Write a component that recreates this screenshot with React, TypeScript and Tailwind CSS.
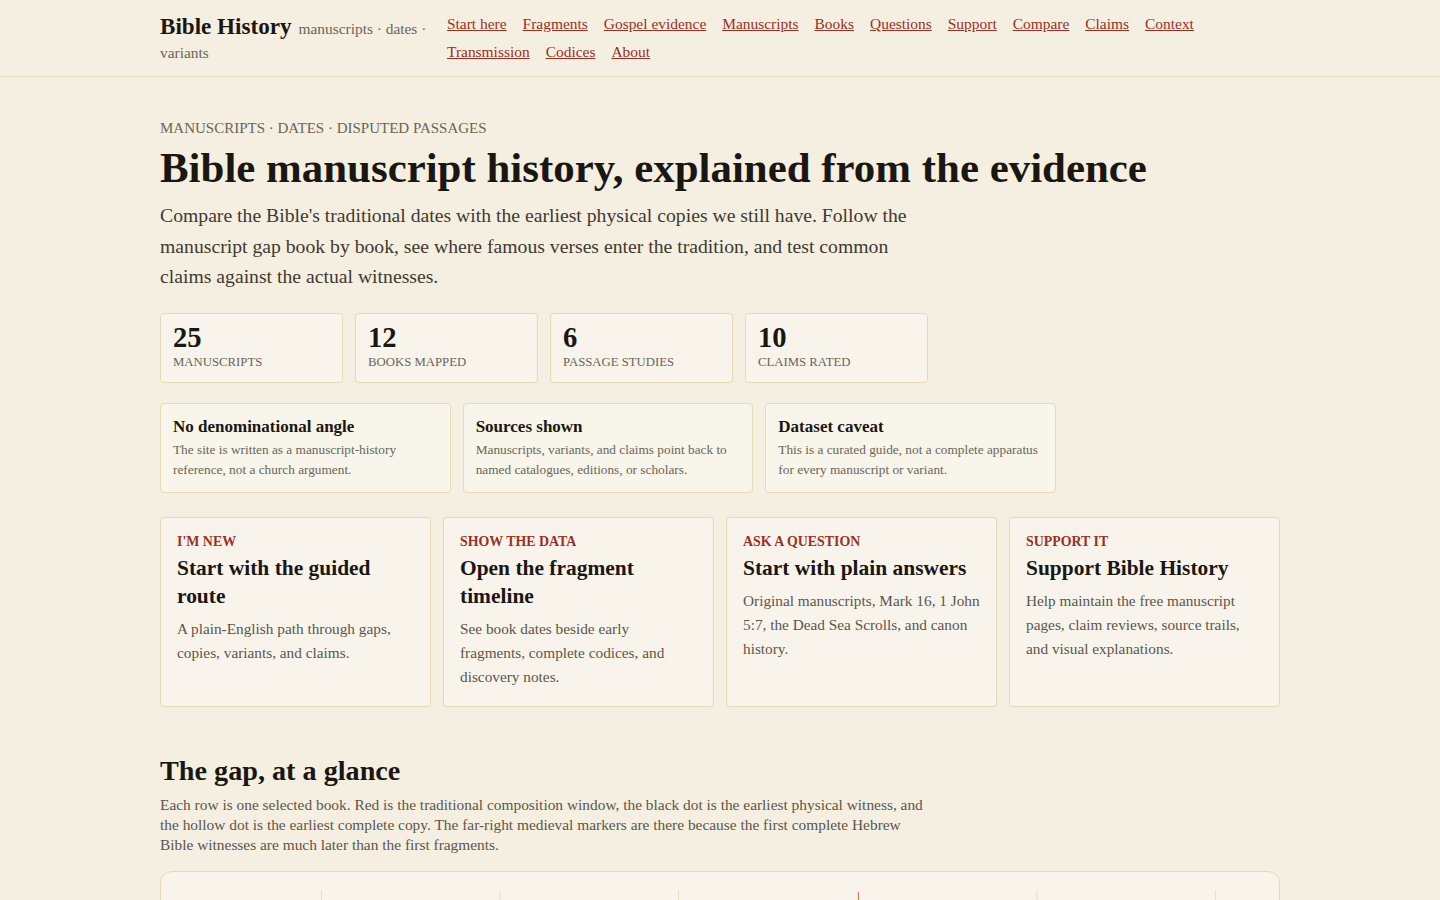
import React from 'react';

const navLinks = ['Start here', 'Fragments', 'Gospel evidence', 'Manuscripts', 'Books', 'Questions', 'Support', 'Compare', 'Claims', 'Context', 'Transmission', 'Codices', 'About'];

const stats = [
  { value: '25', label: 'Manuscripts' },
  { value: '12', label: 'Books mapped' },
  { value: '6', label: 'Passage studies' },
  { value: '10', label: 'Claims rated' },
];

const trust = [
  { title: 'No denominational angle', body: 'The site is written as a manuscript-history reference, not a church argument.' },
  { title: 'Sources shown', body: 'Manuscripts, variants, and claims point back to named catalogues, editions, or scholars.' },
  { title: 'Dataset caveat', body: 'This is a curated guide, not a complete apparatus for every manuscript or variant.' },
];

const routes = [
  { kicker: "I'm new", title: 'Start with the guided route', body: 'A plain-English path through gaps, copies, variants, and claims.' },
  { kicker: 'Show the data', title: 'Open the fragment timeline', body: 'See book dates beside early fragments, complete codices, and discovery notes.' },
  { kicker: 'Ask a question', title: 'Start with plain answers', body: 'Original manuscripts, Mark 16, 1 John 5:7, the Dead Sea Scrolls, and canon history.' },
  { kicker: 'Support it', title: 'Support Bible History', body: 'Help maintain the free manuscript pages, claim reviews, source trails, and visual explanations.' },
];

const ticks = [160.5, 339, 517.5, 697, 876, 1054.5];

export default function App() {
  return (
    <div className="h-screen overflow-hidden bg-[#f4efe0] text-[#1a1712] font-['Liberation_Serif',serif]">
      <header className="border-b border-[#e6d9b8]">
        <div className="max-w-[1120px] mx-auto py-[10px] flex items-start gap-[20px]">
          <div className="w-[267px] shrink-0 leading-[24px] pt-[4px]">
            <span className="text-[23.1px] leading-[24px] font-bold mr-[7px]">Bible History</span>
            <span className="text-[15.4px] leading-[24px] text-[#6b6558]">manuscripts · dates · variants</span>
          </div>
          <nav className="flex flex-wrap gap-x-4">
            {navLinks.map(link => (
              <a key={link} href="#" className="text-[15.45px] leading-[28px] text-[#9a3024] underline">{link}</a>
            ))}
          </nav>
        </div>
      </header>

      <main className="max-w-[1120px] mx-auto pt-[40px]">
        <div className="text-[15px] leading-[22px] uppercase text-[#6b6558]">Manuscripts · Dates · Disputed passages</div>
        <h1 className="mt-[5px] text-[42.9px] leading-[48px] font-bold">Bible manuscript history, explained from the evidence</h1>
        <p className="mt-[8px] max-w-[760px] text-[19.7px] leading-[30.6px] text-[#3f3a30]">
          Compare the Bible's traditional dates with the earliest physical copies we still have. Follow the manuscript gap book by book, see where famous verses enter the tradition, and test common claims against the actual witnesses.
        </p>

        <div className="mt-[21px] flex gap-3">
          {stats.map(stat => (
            <div key={stat.label} className="w-[183px] h-[70px] px-3 pt-[9px] bg-[#f8f4ec] border border-[#e6d9b8] rounded">
              <div className="text-[28.6px] leading-[30px] font-bold">{stat.value}</div>
              <div className="text-[12.75px] leading-[18px] uppercase text-[#6b6558]">{stat.label}</div>
            </div>
          ))}
        </div>

        <div className="mt-[20px] w-[896px] grid grid-cols-3 gap-3">
          {trust.map(item => (
            <div key={item.title} className="h-[90px] px-3 pt-[12px] bg-[#f8f5ea] border border-[#e6d9b8] rounded">
              <div className="text-[17px] leading-[22px] font-bold">{item.title}</div>
              <p className="mt-[2px] text-[13.3px] leading-[20px] text-[#6b6558]">{item.body}</p>
            </div>
          ))}
        </div>

        <div className="mt-[24px] grid grid-cols-4 gap-3">
          {routes.map(route => (
            <div key={route.title} className="h-[190px] px-4 pt-[15px] bg-[#f8f4ec] border border-[#e6d9b8] rounded">
              <div className="text-[13.9px] leading-[18px] font-bold uppercase text-[#9a3024]">{route.kicker}</div>
              <h3 className="mt-[3px] text-[21.45px] leading-[28px] font-bold">{route.title}</h3>
              <p className="mt-[7px] text-[15.3px] leading-[24px] text-[#5c564a]">{route.body}</p>
            </div>
          ))}
        </div>

        <h2 className="mt-[48px] text-[28.2px] leading-[32px] font-bold">The gap, at a glance</h2>
        <p className="mt-[8px] max-w-[770px] text-[15.4px] leading-[20px] text-[#5c564a]">
          Each row is one selected book. Red is the traditional composition window, the black dot is the earliest physical witness, and the hollow dot is the earliest complete copy. The far-right medieval markers are there because the first complete Hebrew Bible witnesses are much later than the first fragments.
        </p>

        <div className="mt-[16px] h-[320px] bg-[#f8f4ec] border border-[#e6d9b8] rounded-xl overflow-hidden">
          <svg width="1118" height="60" className="block">
            {ticks.map(x => (
              <line key={x} x1={x} x2={x} y1="18" y2="60" stroke="#ebdfba" strokeWidth="1" />
            ))}
            <line x1="697.5" x2="697.5" y1="20" y2="60" stroke="#c9785f" strokeWidth="1" />
          </svg>
        </div>
      </main>
    </div>
  );
}
